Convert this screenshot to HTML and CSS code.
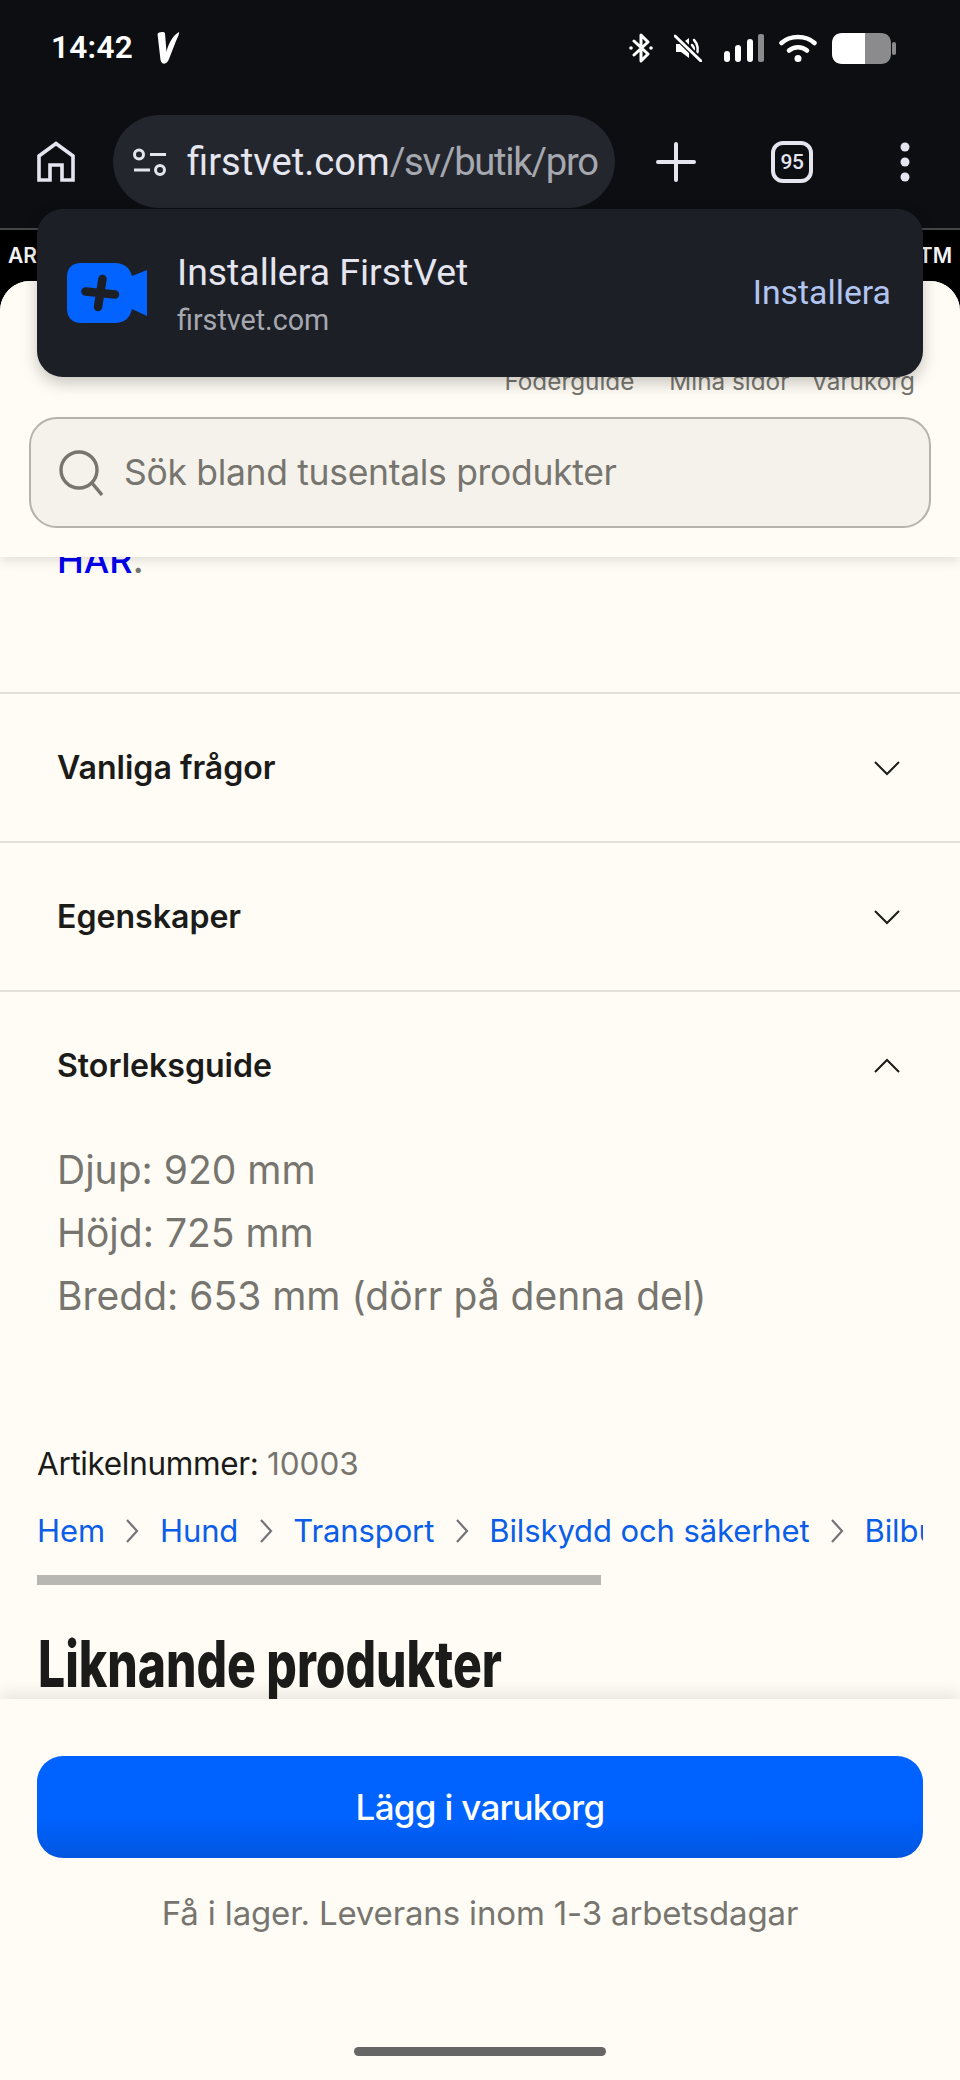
FILE: index.html
```html
<!DOCTYPE html>
<html lang="sv">
<head>
<meta charset="utf-8">
<title>FirstVet</title>
<link rel="stylesheet" href="styles.css">
</head>
<body>
<div class="phone">
  <header class="chrome">
    <div class="status">
      <div class="status-left">
        <span class="time">14:42</span>
        <svg class="logo-v" viewBox="0 0 24 34"><path d="M1.500 3C2 1 8.500 0 9 2.500L10.500 21C12 14 16 5 23 1 23.500 2 22 6 20 10L13 28C11 34 5.500 34 4.500 29Z" fill="#fff"/></svg>
      </div>
      <div class="status-right">
        <svg class="ic-bt" viewBox="0 0 26 30" fill="none" stroke="#fff" stroke-width="3" stroke-linejoin="round" stroke-linecap="round"><path d="M6 8 20 21 13 28V2L20 9 6 22"/><circle cx="3" cy="15" r="1.800" fill="#fff" stroke="none"/><circle cx="23" cy="15" r="1.800" fill="#fff" stroke="none"/></svg>
        <svg class="ic-mute" viewBox="0 0 28 28"><path d="M2 10H7L15 4V24L7 18H2Z" fill="#fff"/><path d="M20 6C24 10 25 17 22 22M18 11C20 13 20 16 19 18" fill="none" stroke="#fff" stroke-width="2.500" stroke-linecap="round"/><path d="M1 1 27 27" stroke="#0d0e12" stroke-width="6"/><path d="M1 2 27 27" stroke="#fff" stroke-width="3" stroke-linecap="round"/></svg>
        <svg class="ic-signal" viewBox="0 0 41 28"><rect x="0" y="17" width="6" height="11" rx="3" fill="#fff"/><rect x="11" y="11" width="6" height="17" rx="3" fill="#fff"/><rect x="23" y="5" width="6" height="23" rx="3" fill="#fff"/><rect x="34" y="0" width="6" height="28" rx="2" fill="#8b8b8d"/></svg>
        <svg class="ic-wifi" viewBox="0 0 38 28" fill="none" stroke="#fff" stroke-width="4.500" stroke-linecap="round"><path d="M2.500 9C11 1 27 1 35.500 9"/><path d="M10 16.500C15 12 23 12 28 16.500"/><circle cx="19" cy="24.500" r="3.500" fill="#fff" stroke="none"/></svg>
        <svg class="ic-batt" viewBox="0 0 64 31"><path d="M33 0H49C55 0 59 4 59 10V21C59 27 55 31 49 31H33Z" fill="#8b8b8d"/><path d="M33 0H10C4 0 0 4 0 10V21C0 27 4 31 10 31H33Z" fill="#fff"/><rect x="60" y="9" width="4" height="13" rx="2" fill="#8b8b8d"/></svg>
      </div>
    </div>
    <div class="toolbar">
      <svg class="ic-home" viewBox="0 0 38 41" fill="none" stroke="#e4e5ef" stroke-width="3.600"><path d="M2 39V15L19 2.500 36 15V39H25V24H13V39Z" stroke-linejoin="miter"/></svg>
      <div class="omnibox">
        <svg class="ic-tune" viewBox="0 0 34 28" fill="none" stroke="#e4e5ef" stroke-width="3"><circle cx="6" cy="6.500" r="4.500"/><path d="M17 6.500H33M1 22H17"/><circle cx="27" cy="22" r="4.500"/></svg>
        <span class="url"><span class="url-host">firstvet.com</span><span class="url-path">/sv/butik/pro</span></span>
      </div>
      <svg class="ic-plus" viewBox="0 0 40 40" stroke="#e4e5ef" stroke-width="4" stroke-linecap="round"><path d="M20 2V38M2 20H38"/></svg>
      <div class="tabs">95</div>
      <svg class="ic-dots" viewBox="0 0 12 40" fill="#e4e5ef"><circle cx="6" cy="5" r="4.500"/><circle cx="6" cy="20" r="4.500"/><circle cx="6" cy="35" r="4.500"/></svg>
    </div>
  </header>

  <div class="viewport">
    <div class="promo"><span>AR</span><span>TM</span></div>
    <div class="sheet">
      <div class="sheet-head">
        <nav class="top-nav">
          <a>Foderguide</a><a>Mina sidor</a><a>Varukorg</a>
        </nav>
        <div class="search">
          <svg class="ic-search" viewBox="0 0 44 46" fill="none" stroke="#77756f" stroke-width="3.400"><circle cx="20" cy="20" r="18"/><path d="M33 33 43 45"/></svg>
          <span>Sök bland tusentals produkter</span>
        </div>
      </div>

      <main class="content">
        <p class="har"><a>HAR</a>.</p>
        <section class="acc">
          <h3>Vanliga frågor</h3>
          <svg class="chev" viewBox="0 0 28 16"><path d="M2 2 14 14 26 2"/></svg>
        </section>
        <section class="acc">
          <h3>Egenskaper</h3>
          <svg class="chev" viewBox="0 0 28 16"><path d="M2 2 14 14 26 2"/></svg>
        </section>
        <section class="acc">
          <h3>Storleksguide</h3>
          <svg class="chev" viewBox="0 0 28 16"><path d="M2 14 14 2 26 14"/></svg>
        </section>
        <div class="sizes">
          <p>Djup: 920 mm</p>
          <p>Höjd: 725 mm</p>
          <p>Bredd: 653 mm (dörr på denna del)</p>
        </div>
        <p class="sku">Artikelnummer: <span>10003</span></p>
        <div class="crumbs">
          <a>Hem</a>
          <svg class="sep" viewBox="0 0 14 26"><path d="M2 2 12 13 2 24"/></svg>
          <a>Hund</a>
          <svg class="sep" viewBox="0 0 14 26"><path d="M2 2 12 13 2 24"/></svg>
          <a>Transport</a>
          <svg class="sep" viewBox="0 0 14 26"><path d="M2 2 12 13 2 24"/></svg>
          <a>Bilskydd och säkerhet</a>
          <svg class="sep" viewBox="0 0 14 26"><path d="M2 2 12 13 2 24"/></svg>
          <a>Bilbur</a>
        </div>
        <div class="scroll-thumb"></div>
        <h2 class="similar">Liknande produkter</h2>
      </main>

      <footer class="buybar">
        <button class="buy">Lägg i varukorg</button>
        <p class="stock">Få i lager. Leverans inom 1-3 arbetsdagar</p>
        <div class="home-bar"></div>
      </footer>
    </div>

    <aside class="install">
      <svg class="app-icon" viewBox="0 0 80 62"><path d="M14 1H48C57 1 63 6 65 14L80 8V54L65 47C63 56 57 61 48 61H14C5 61 0 55 0 47V15C0 6 5 1 14 1Z" fill="#0263ff"/><path d="M18.500 29.500 48 32.500M35.500 17 31 45" fill="none" stroke="#1d1f27" stroke-width="8.500" stroke-linecap="round"/></svg>
      <div class="install-text">
        <strong>Installera FirstVet</strong>
        <span>firstvet.com</span>
      </div>
      <a class="install-btn">Installera</a>
    </aside>
  </div>
</div>
</body>
</html>
```

FILE: styles.css
```css
* { box-sizing: border-box; }
html, body { margin: 0; padding: 0; }
body { width: 960px; height: 2080px; overflow: hidden; background: #0d0e12; font-family: Inter, "Liberation Sans", sans-serif; }
p, h2, h3 { margin: 0; }
.phone { width: 960px; height: 2080px; display: flex; flex-direction: column; }

.chrome { background: #0d0e12; flex: none; }
.status { height: 96px; display: flex; justify-content: space-between; align-items: center; padding: 0 64px 0 51px; }
.status-left { display: flex; align-items: center; gap: 23px; }
.time { color: #fff; font: 600 31.500px/36px Roboto, sans-serif; letter-spacing: .3px; }
.logo-v { width: 24px; height: 34px; }
.status-right { display: flex; align-items: center; }
.ic-bt { width: 26px; height: 30px; margin-right: 20px; }
.ic-mute { width: 28px; height: 28px; margin-right: 22px; }
.ic-signal { width: 41px; height: 28px; margin-right: 14px; }
.ic-wifi { width: 38px; height: 28px; margin-right: 15px; }
.ic-batt { width: 64px; height: 31px; }

.toolbar { height: 132px; padding: 19px 0 20px 37px; display: flex; align-items: center; }
.ic-home { width: 38px; height: 41px; flex: none; }
.omnibox { width: 502px; height: 93px; margin-left: 38px; padding-left: 20px; border-radius: 47px; background: #23262d; display: flex; align-items: center; flex: none; }
.ic-tune { width: 34px; height: 28px; flex: none; }
.url { margin-left: 20px; font: 400 38.200px/44px Roboto, sans-serif; white-space: nowrap; }
.url-host { color: #e4e5ef; }
.url-path { color: #a6a8b0; letter-spacing: -1.300px; }
.ic-plus { width: 40px; height: 40px; margin-left: 41px; flex: none; }
.tabs { width: 42px; height: 42px; margin-left: 75px; border: 4px solid #e4e5ef; border-radius: 12px; color: #e4e5ef; font: 500 21px/34px Roboto, sans-serif; letter-spacing: -.5px; text-align: center; flex: none; }
.ic-dots { width: 12px; height: 40px; margin-left: 86px; flex: none; }

.viewport { flex: 1; min-height: 0; position: relative; display: flex; flex-direction: column; background: #000; border-top: 2px solid #45464a; }
.promo { height: 51px; flex: none; padding: 0 8px; display: flex; justify-content: space-between; align-items: center; color: #f4f4f4; font: 600 21px/26px Inter, sans-serif; }
.sheet { flex: 1; min-height: 0; display: flex; flex-direction: column; background: #fffcf5; border-radius: 30px 30px 0 0; overflow: hidden; }
.sheet-head { height: 276px; flex: none; position: relative; z-index: 2; padding: 86px 29px 0; background: #fffcf5; box-shadow: 0 3px 12px rgba(0,0,0,.13); }
.top-nav { display: flex; justify-content: flex-end; gap: 35px; padding-right: 16px; color: #77756f; font: 400 24.300px/28px Inter, sans-serif; height: 50px; }
.top-nav a:last-child { margin-left: -13px; }
.search { height: 111px; display: flex; align-items: center; padding-left: 28px; gap: 21px; background: #f5f2eb; border: 2px solid #b6b3ab; border-radius: 28px; color: #77756f; font: 400 35.500px/44px Inter, sans-serif; letter-spacing: -.32px; }
.ic-search { width: 44px; height: 46px; flex: none; }

.content { flex: 1; min-height: 0; overflow: hidden; }
.har { margin: -19px 0 110px 57px; font: 500 36px/44px Inter, sans-serif; color: #77756f; }
.har a { color: #0000ee; }
.acc { height: 149px; border-top: 2px solid #e1e0da; padding: 0 57px; display: flex; justify-content: space-between; align-items: center; }
.acc h3 { font: 600 32.100px/40px Inter, sans-serif; color: #1b1b19; }
.chev { width: 28px; height: 16px; margin-right: 2px; fill: none; stroke: #1b1b19; stroke-width: 2; }
.sizes { margin-top: -1px; padding: 0 57px; color: #77756f; font: 400 39px/63px Inter, sans-serif; }
.sku { margin: 117px 0 0 37px; font: 400 31.500px/40px Inter, sans-serif; letter-spacing: -.35px; color: #1b1b19; }
.sku span { color: #77756f; letter-spacing: 0; }
.crumbs { margin: 27px 37px 0; height: 40px; display: flex; align-items: center; gap: 20.500px; overflow: hidden; font: 400 31px/40px Inter, sans-serif; letter-spacing: -.1px; color: #0a5ee8; white-space: nowrap; }
.sep { width: 14px; height: 26px; flex: none; fill: none; stroke: #74737a; stroke-width: 2.200; }
.scroll-thumb { width: 564px; height: 10px; margin: 24px 0 0 37px; background: #b9b7b1; }
.similar { display: inline-block; margin: 40px 0 0 38px; transform: scaleX(.75); transform-origin: left center; font: 800 64px/78px Inter, sans-serif; color: #1b1b19; white-space: nowrap; }

.buybar { height: 381px; flex: none; position: relative; z-index: 2; padding: 57px 37px 0; background: #fffcf5; box-shadow: 0 -6px 14px rgba(0,0,0,.09); display: flex; flex-direction: column; align-items: center; }
.buy { width: 886px; height: 102px; flex: none; border: 0; border-radius: 26px; background: linear-gradient(#0062ff 60%, #0056e0); color: #fff; font: 500 35px/44px Inter, sans-serif; letter-spacing: -.7px; }
.stock { margin-top: 34px; color: #77756f; font: 400 33px/42px Inter, sans-serif; letter-spacing: -.15px; }
.home-bar { width: 252px; height: 9px; margin-top: 113px; border-radius: 5px; background: #666; }

.install { position: absolute; left: 37px; top: -21px; width: 886px; height: 168px; z-index: 5; display: flex; align-items: center; padding: 0 32px 0 30px; border-radius: 26px; background: #1d1f27; box-shadow: 0 6px 16px rgba(0,0,0,.22); }
.app-icon { width: 80px; height: 62px; flex: none; }
.install-text { margin-left: 30px; flex: 1; display: flex; flex-direction: column; gap: 9px; }
.install-text strong { color: #e4e5ef; font: 400 37.400px/44px Roboto, sans-serif; }
.install-text span { color: #a6a8b0; font: 400 28.700px/34px Roboto, sans-serif; }
.install-btn { color: #b1c5f0; font: 400 33.800px/38px Roboto, sans-serif; }
```
